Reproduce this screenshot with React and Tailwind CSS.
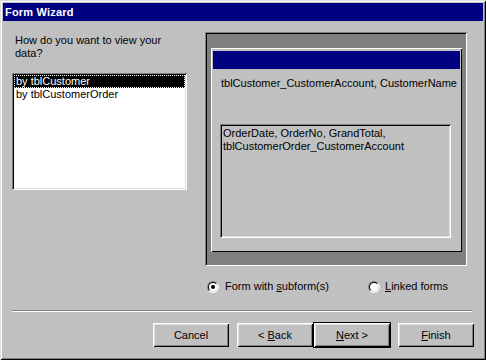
const raised = 'shadow-[inset_1px_1px_#fff,inset_-1px_-1px_#000,inset_2px_2px_#dfdfdf,inset_-2px_-2px_#808080]'
const sunken = 'shadow-[inset_1px_1px_#808080,inset_-1px_-1px_#fff,inset_2px_2px_#000,inset_-2px_-2px_#dfdfdf]'

function Radio({ checked }) {
  return (
    <span className="w-[12px] h-[12px] rounded-full border border-t-[#808080] border-l-[#808080] border-r-white border-b-white flex">
      <span className="flex-1 rounded-full bg-white border border-t-black border-l-black border-r-[#dfdfdf] border-b-[#dfdfdf] flex items-center justify-center">
        {checked && <span className="w-[4px] h-[4px] rounded-full bg-black" />}
      </span>
    </span>
  )
}

function Button({ children, isDefault }) {
  const inner = (
    <div className={`w-[76px] h-[24px] bg-[#c0c0c0] flex items-center justify-center ${raised}`}>
      <span className="whitespace-pre">{children}</span>
    </div>
  )
  if (!isDefault) return inner
  return <div className="border border-black">{inner}</div>
}

export default function App() {
  return (
    <div className={`w-[486px] h-[360px] bg-[#c0c0c0] p-[3px] flex flex-col text-[11px] leading-[13px] text-black font-['Liberation_Sans',Arial,sans-serif] shadow-[inset_1px_1px_#dfdfdf,inset_-1px_-1px_#000,inset_2px_2px_#fff,inset_-2px_-2px_#808080]`}>
      {/* Title bar */}
      <div className="h-[18px] bg-[#000080] text-white font-bold text-[11px] tracking-[0.2px] pl-[2px] flex items-center">
        Form Wizard
      </div>

      {/* Body */}
      <div className="flex pl-[9px] pt-[11px]">
        <div className="w-[175px]">
          <p className="mt-[2px] ml-[3px]">How do you want to view your<br />data?</p>
          <div className={`mt-[13px] h-[117px] bg-white p-[2px] ${sunken}`}>
            <div className="h-[13px] leading-[11px] bg-black text-white border border-dotted border-white pl-[1px]">
              by tblCustomer
            </div>
            <div className="h-[13px] pl-[2px]">by tblCustomerOrder</div>
          </div>
        </div>

        <div className="ml-[18px] w-[262px]">
          {/* Preview frame */}
          <div className="h-[234px] bg-[#808080] pl-[6px] pt-[16px] shadow-[inset_1px_1px_#808080,inset_-1px_-1px_#fff,inset_2px_2px_#000]">
            <div className="w-[251px] h-[204px] bg-[#c0c0c0] pt-[3px] shadow-[inset_1px_1px_#fff,inset_-1px_-1px_#000]">
              <div className="mx-[2px] h-[18px] bg-[#000080]" />
              <p className="mt-[8px] pl-[10px]">tblCustomer_CustomerAccount, CustomerName</p>
              <div className={`mt-[34px] ml-[9px] w-[231px] h-[114px] pl-[3px] pt-[3px] ${sunken}`}>
                <p>OrderDate, OrderNo, GrandTotal,<br />tblCustomerOrder_CustomerAccount</p>
              </div>
            </div>
          </div>

          {/* Options */}
          <div className="mt-[14px] flex items-center h-[13px] pl-[2px]">
            <div className="w-[161px] flex items-center">
              <Radio checked />
              <span className="ml-[6px]">Form with <span className="underline">s</span>ubform(s)</span>
            </div>
            <div className="flex items-center">
              <Radio />
              <span className="ml-[5px]"><span className="underline">L</span>inked forms</span>
            </div>
          </div>
        </div>
      </div>

      {/* Separator */}
      <div className="mt-[17px] ml-[9px] w-[460px] h-[2px] border-t border-t-[#808080] border-b border-b-white" />

      {/* Buttons */}
      <div className="mt-[11px] ml-[150px] flex items-start">
        <Button>Cancel</Button>
        <div className="ml-[8px]">
          <Button>{'< '}<span className="underline">B</span>ack</Button>
        </div>
        <div className="-mt-[1px]">
          <Button isDefault><span className="underline">N</span>{'ext >'}</Button>
        </div>
        <div className="ml-[7px]">
          <Button><span className="underline">F</span>inish</Button>
        </div>
      </div>
    </div>
  )
}
